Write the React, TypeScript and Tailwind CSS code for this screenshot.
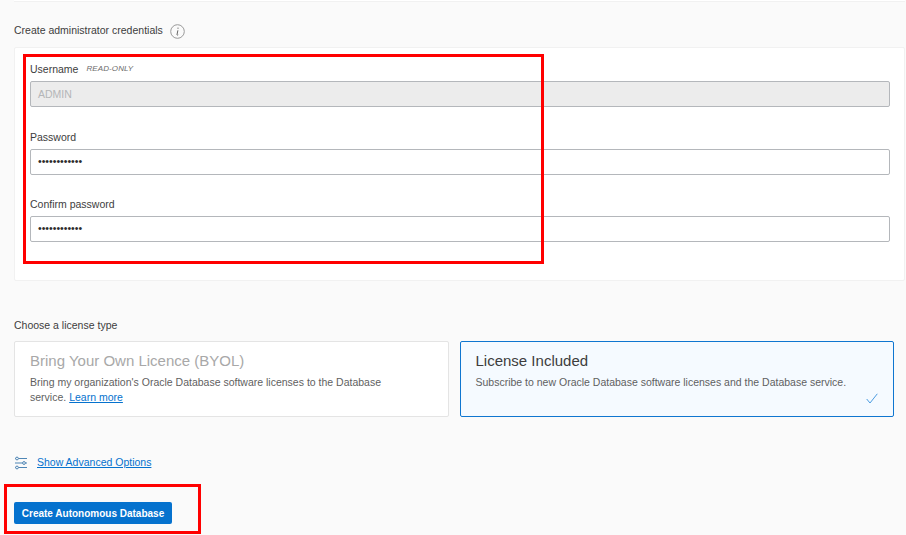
import React from 'react';

function Field({ label, value, readOnly, gapClass }: { label: string; value: string; readOnly?: boolean; gapClass: string }) {
  return (
    <div className={gapClass}>
      <div className="flex h-[14px] items-center gap-2 text-[10.5px] leading-[14px] text-[#3d3d3d]">
        <span>{label}</span>
        {readOnly && <span className="text-[8px] italic tracking-[0.1px] text-[#6b6b6b]">READ-ONLY</span>}
      </div>
      <div
        className={
          'mt-[5px] flex h-[26px] items-center rounded-[2px] border border-[#b4b7bb] px-[7px] ' +
          (readOnly ? 'bg-[#ececec] pt-px text-[10.5px] text-[#b4b6b8]' : 'bg-white text-[10.5px] text-[#2c2c2c]')
        }
      >
        {value}
      </div>
    </div>
  );
}

export default function App() {
  return (
    <div className="relative h-[535px] w-[906px] overflow-hidden bg-[#fafafa] font-['Liberation_Sans',Arial,sans-serif]">
      {/* Previous card edge */}
      <div className="ml-[14px] mr-px h-[2px] border-b border-[#f1f1f1] bg-white" />

      <div className="ml-[14px] mr-px pt-[21px]">
        <div className="flex h-[16px] items-center gap-[7px] text-[10.5px] text-[#3d3d3d]">
          <span>Create administrator credentials</span>
          <svg width="15" height="15" viewBox="0 0 15 15" fill="none">
            <circle cx="7.5" cy="7.5" r="6.8" stroke="#999999" />
            <path d="M8 3.6v1.2M7.9 6.3 7 10.6c0 .7.6.6 1.2.2" stroke="#666666" strokeWidth="1" />
          </svg>
        </div>

        {/* Credentials card */}
        <div className="mt-[8px] h-[234px] rounded-[2px] border border-[#f1f1f1] bg-white pl-[15px] pr-[14px] pt-[14px]">
          <Field label="Username" value="ADMIN" readOnly gapClass="" />
          <Field label="Password" value="••••••••••••" gapClass="mt-[23px]" />
          <Field label="Confirm password" value="••••••••••••" gapClass="mt-[22px]" />
        </div>

        <div className="mt-[37px] text-[10.5px] leading-[14px] text-[#3d3d3d]">Choose a license type</div>

        {/* License cards */}
        <div className="mr-[11px] mt-[9px] grid grid-cols-2 gap-[11px]">
          <div className="h-[76px] rounded-[2px] border border-[#e4e4e4] bg-white pl-[15px] pr-[30px] pt-[9px]">
            <div className="text-[15px] leading-[20px] text-[#a8a8a8]">Bring Your Own Licence (BYOL)</div>
            <div className="mt-[4px] text-[10.5px] leading-[15px] text-[#5f5f5f]">
              <div>Bring my organization's Oracle Database software licenses to the Database</div>
              <div className="flex gap-[3px]">
                <span>service.</span>
                <a className="text-[#0572ce] underline">Learn more</a>
              </div>
            </div>
          </div>
          <div className="relative h-[76px] rounded-[2px] border border-[#0f76d0] bg-[#f5faff] pl-[15px] pr-[10px] pt-[9px]">
            <div className="text-[15px] leading-[20px] text-[#3d3d3d]">License Included</div>
            <p className="mt-[4px] text-[10.5px] leading-[15px] text-[#5f5f5f]">
              Subscribe to new Oracle Database software licenses and the Database service.
            </p>
            <svg className="absolute bottom-[12px] right-[15px]" width="12" height="11" viewBox="0 0 12 11" fill="none">
              <path d="M.7 6 4 10 11.3.8" stroke="#4a9be0" strokeWidth="1" />
            </svg>
          </div>
        </div>

        <div className="mt-[38px] flex h-[16px] items-center gap-[9px]">
          <svg width="14" height="14" viewBox="0 0 14 14" fill="none" stroke="#4f86b5" strokeWidth="1">
            <path d="M1 2.5h.6M4.4 2.5H13M1 7h7.6M11.4 7H13M1 11.5h.6M4.4 11.5H13" />
            <circle cx="3" cy="2.5" r="1.4" />
            <circle cx="10" cy="7" r="1.4" />
            <circle cx="3" cy="11.5" r="1.4" />
          </svg>
          <span className="text-[10.5px] text-[#0572ce] underline">Show Advanced Options</span>
        </div>

        <button className="mt-[31px] block h-[22px] w-[158px] rounded-[2px] bg-[#0572ce] text-[10px] font-bold text-white">
          Create Autonomous Database
        </button>
      </div>

      {/* Annotation boxes */}
      <div className="absolute left-[23px] top-[54px] h-[210px] w-[521px] border-[3px] border-[#ff0000]" />
      <div className="absolute left-[4px] top-[484px] h-[50px] w-[197px] border-[3px] border-[#ff0000]" />
    </div>
  );
}
